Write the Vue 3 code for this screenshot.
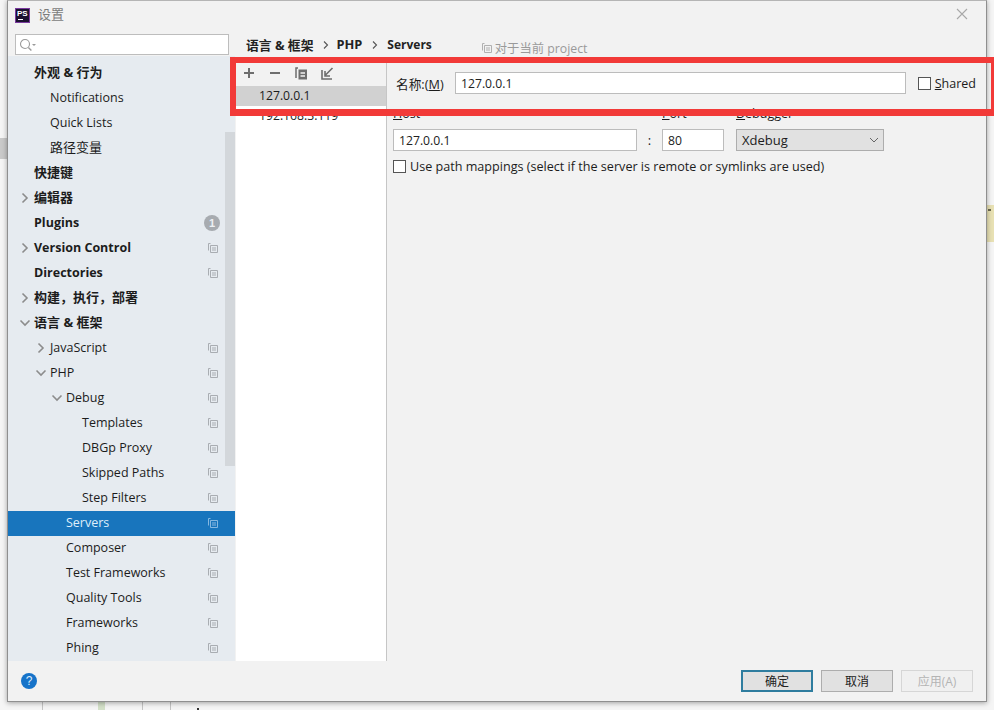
<script setup>
const tree = [
  { label: '外观 & 行为', level: 0, bold: true },
  { label: 'Notifications', level: 1 },
  { label: 'Quick Lists', level: 1 },
  { label: '路径变量', level: 1 },
  { label: '快捷键', level: 0, bold: true },
  { label: '编辑器', level: 0, bold: true, arrow: 'right' },
  { label: 'Plugins', level: 0, bold: true, badge: '1' },
  { label: 'Version Control', level: 0, bold: true, arrow: 'right', copy: true },
  { label: 'Directories', level: 0, bold: true, copy: true },
  { label: '构建，执行，部署', level: 0, bold: true, arrow: 'right' },
  { label: '语言 & 框架', level: 0, bold: true, arrow: 'down' },
  { label: 'JavaScript', level: 1, arrow: 'right', copy: true },
  { label: 'PHP', level: 1, arrow: 'down', copy: true },
  { label: 'Debug', level: 2, arrow: 'down', copy: true },
  { label: 'Templates', level: 3, copy: true },
  { label: 'DBGp Proxy', level: 3, copy: true },
  { label: 'Skipped Paths', level: 3, copy: true },
  { label: 'Step Filters', level: 3, copy: true },
  { label: 'Servers', level: 2, copy: true, selected: true },
  { label: 'Composer', level: 2, copy: true },
  { label: 'Test Frameworks', level: 2, copy: true },
  { label: 'Quality Tools', level: 2, copy: true },
  { label: 'Frameworks', level: 2, copy: true },
  { label: 'Phing', level: 2, copy: true }
]
const isCjk = (text) => /[\u4e00-\u9fff]/.test(text)
</script>

<template>
  <div class="page">
    <div class="bg-left"></div>
    <div class="bg-right"><i></i></div>
    <div class="bg-bottom">
      <i class="line l1"></i><i class="green"></i><i class="line l2"></i><i class="line l3"></i><i class="mark"></i>
    </div>

    <div class="dialog">
      <header class="titlebar">
        <div class="logo"><span>PS</span><i></i></div>
        <span class="title">设置</span>
        <svg class="close" width="12" height="12" viewBox="0 0 12 12">
          <path d="M1 1l10 10M11 1L1 11" stroke="#a8a8a8" stroke-width="1.1" fill="none" />
        </svg>
      </header>

      <div class="content">
        <aside class="sidebar">
          <div class="searchwrap">
            <div class="search">
              <svg width="18" height="14" viewBox="0 0 18 14">
                <circle cx="6" cy="6" r="4.5" stroke="#9a9a9a" stroke-width="1.1" fill="none" />
                <path d="M9.4 9.4l3 3" stroke="#9a9a9a" stroke-width="1.4" />
                <path d="M13 6h4l-2 2z" fill="#9a9a9a" />
              </svg>
            </div>
          </div>
          <div class="tree">
            <div
              v-for="item in tree"
              :key="item.label"
              class="row"
              :class="{ bold: item.bold, selected: item.selected, cjk: isCjk(item.label) }"
              :style="{ paddingLeft: 26 + item.level * 16 + 'px' }"
            >
              <svg v-if="item.arrow === 'right'" class="arrow" width="10" height="12" viewBox="0 0 10 12">
                <path d="M2.5 1.5L7 6l-4.5 4.5" stroke="#8c8c8c" stroke-width="1.6" fill="none" />
              </svg>
              <svg v-if="item.arrow === 'down'" class="arrow down" width="12" height="10" viewBox="0 0 12 10">
                <path d="M1.5 2.5L6 7l4.5-4.5" stroke="#8c8c8c" stroke-width="1.6" fill="none" />
              </svg>
              <span class="rowlabel">{{ item.label }}</span>
              <svg v-if="item.copy" class="copy" width="10" height="10" viewBox="0 0 10 10">
                <path d="M2.5 .5H.5v7M2.5 2.5h7v7h-7zM4 5h4M4 7h4" stroke="currentColor" fill="none" />
              </svg>
              <span v-if="item.badge" class="badge">{{ item.badge }}</span>
            </div>
            <div class="scrollbar"></div>
          </div>
        </aside>

        <section class="main">
          <nav class="crumbs">
            <b>语言 &amp; 框架</b>
            <svg class="sep" width="6" height="8" viewBox="0 0 6 8"><path d="M1 .5L4.5 4 1 7.5" stroke="#555" stroke-width="1.1" fill="none" /></svg>
            <b>PHP</b>
            <svg class="sep" width="6" height="8" viewBox="0 0 6 8"><path d="M1 .5L4.5 4 1 7.5" stroke="#555" stroke-width="1.1" fill="none" /></svg>
            <b class="last">Servers</b>
            <span class="scope">
              <svg width="10" height="10" viewBox="0 0 10 10">
                <path d="M2.5 .5H.5v7M2.5 2.5h7v7h-7zM4 5h4M4 7h4" stroke="#b0b0b0" fill="none" />
              </svg>
              对于当前 project
            </span>
          </nav>

          <div class="split">
            <div class="list">
              <div class="listbar">
                <svg width="12" height="12" viewBox="0 0 12 12"><path d="M6 1v10M1 6h10" stroke="#6e6e6e" stroke-width="2" /></svg>
                <svg width="12" height="12" viewBox="0 0 12 12"><path d="M1 6h10" stroke="#6e6e6e" stroke-width="2" /></svg>
                <svg width="13" height="13" viewBox="0 0 13 13">
                  <path d="M3 1H1v10" stroke="#6e6e6e" stroke-width="1.5" fill="none" />
                  <path d="M3.500 2.500h8.500v10H3.500z" fill="#6e6e6e" />
                  <path d="M5.500 6h4.500M5.500 9h4.500" stroke="#f2f2f2" stroke-width="1.4" />
                </svg>
                <svg width="13" height="13" viewBox="0 0 13 13">
                  <path d="M1 3v9h10" stroke="#6e6e6e" stroke-width="1.6" fill="none" />
                  <path d="M11.500 1L4.500 8M4 4v5h5" stroke="#6e6e6e" stroke-width="1.6" fill="none" />
                </svg>
              </div>
              <div class="server active">127.0.0.1</div>
              <div class="server">192.168.3.119</div>
            </div>

            <div class="form">
              <div class="namerow">
                <label class="namelabel">名称:(<u>M</u>)</label>
                <input class="input grow" value="127.0.0.1" />
                <span class="box"></span>
                <span class="boxlabel"><u>S</u>hared</span>
              </div>

              <div class="fields">
                <div class="field host">
                  <label><u>H</u>ost</label>
                  <input class="input" value="127.0.0.1" />
                </div>
                <span class="colon">:</span>
                <div class="field port">
                  <label><u>P</u>ort</label>
                  <input class="input" value="80" />
                </div>
                <div class="field debugger">
                  <label><u>D</u>ebugger</label>
                  <div class="select">
                    <span>Xdebug</span>
                    <svg width="10" height="6" viewBox="0 0 10 6"><path d="M1 1l4 4 4-4" stroke="#666" fill="none" /></svg>
                  </div>
                </div>
              </div>

              <div class="mapping">
                <span class="box"></span>
                <span class="maptext">Use path mappings (select if the server is remote or symlinks are used)</span>
              </div>
            </div>
          </div>
        </section>
      </div>

      <footer class="footer">
        <span class="help">?</span>
        <div class="buttons">
          <button class="btn primary">确定</button>
          <button class="btn">取消</button>
          <button class="btn disabled">应用(A)</button>
        </div>
      </footer>
    </div>

    <div class="redbox"></div>
  </div>
</template>

<style>
html, body { margin: 0; padding: 0; }
</style>

<style scoped>
.page {
  position: relative;
  width: 994px;
  height: 710px;
  overflow: hidden;
  background: #f5f5f5;
  font-family: "Open Sans", "Noto Sans CJK SC", sans-serif;
  font-size: 13px;
  color: #1c1c1c;
}
.bg-left { position: absolute; left: 0; top: 138px; width: 7px; height: 21px; background: #c9c9c9; }
.bg-right { position: absolute; right: 0; top: 205px; width: 7px; height: 37px; background: #e8e1b4; }
.bg-right i { position: absolute; left: 1px; top: 4px; width: 3px; height: 2px; background: #6d6a50; }
.bg-bottom { position: absolute; left: 0; right: 0; top: 702px; height: 8px; }
.line { position: absolute; top: 0; width: 1px; height: 8px; background: #c4c4c4; }
.l1 { left: 42px; }
.l2 { left: 142px; }
.l3 { left: 170px; }
.green { position: absolute; left: 98px; top: 0; width: 7px; height: 8px; background: #d3e0c8; }
.mark { position: absolute; left: 197px; top: 6px; width: 2px; height: 2px; background: #333; }

.dialog {
  position: relative;
  margin-left: 7px;
  width: 980px;
  height: 702px;
  box-sizing: border-box;
  border: 1px solid #8f8f8f;
  border-top-color: #b5b5b5;
  background: #f2f2f2;
  display: flex;
  flex-direction: column;
  box-shadow: 0 1px 5px rgba(0, 0, 0, .35);
}

.titlebar {
  height: 29px;
  flex: none;
  display: flex;
  align-items: center;
  padding: 0 17px 0 7px;
}
.logo {
  width: 15px;
  height: 15px;
  flex: none;
  box-sizing: border-box;
  background: #1b1030;
  border: 1px solid #7a3a9e;
  position: relative;
  color: #fff;
  font: 700 8px/10px "Liberation Sans", sans-serif;
  padding-left: 1px;
}
.logo span { display: block; }
.logo i { position: absolute; left: 2px; bottom: 2px; width: 5px; height: 1px; background: #fff; }
.title { margin-left: 8px; margin-top: -3px; color: #7c7c7c; font-size: 13px; line-height: 20px; }
.close { margin-left: auto; margin-top: -3px; margin-right: 1px; }

.content { flex: 1; min-height: 0; display: flex; }

.sidebar { width: 227px; flex: none; display: flex; flex-direction: column; background: #e6ebf0; }
.searchwrap { background: #f2f2f2; padding: 4px 6px 0 7px; height: 26px; box-sizing: border-box; }
.search {
  width: 214px;
  height: 21px;
  box-sizing: border-box;
  background: #fff;
  border: 1px solid #bdbdbd;
  display: flex;
  align-items: center;
  padding-left: 3px;
}
.tree { position: relative; flex: 1; min-height: 0; overflow: hidden; padding-top: 5px; }
.row {
  position: relative;
  height: 25px;
  box-sizing: border-box;
  padding-bottom: 2px;
  display: flex;
  align-items: center;
  padding-right: 17px;
  white-space: nowrap;
  font-size: 12.5px;
}
.row.cjk { font-size: 13px; }
.row.bold .rowlabel { font-weight: 700; }
.row.selected { background: #1875bd; color: #dfeefa; }
.row.selected .copy { color: #86b8e0; }
.rowlabel { flex: 1; line-height: 23px; }
.arrow { margin-left: -14px; margin-right: 4px; flex: none; }
.arrow.down { margin-left: -15px; margin-right: 3px; }
.copy { flex: none; color: #a9adb2; position: relative; z-index: 1; }
.badge {
  width: 16px;
  height: 16px;
  flex: none;
  border-radius: 50%;
  background: #a7abb0;
  color: #eef1f4;
  font: 700 11px/16px "Liberation Sans", sans-serif;
  text-align: center;
  margin-right: -2px;
  position: relative;
  z-index: 1;
}
.scrollbar { position: absolute; right: 0; top: 76px; width: 10px; height: 334px; background: #d3d7db; }

.main { flex: 1; min-width: 0; display: flex; flex-direction: column; margin-left: 1px; }
.crumbs {
  height: 30px;
  flex: none;
  display: flex;
  align-items: center;
  padding: 0 0 2px 10px;
  box-sizing: border-box;
  color: #222;
}
.crumbs b { font-weight: 700; font-size: 12.8px; }
.crumbs b.last { font-size: 12px; margin-left: 2px; }
.sep { margin: 1px 7px 0 10px; }
.scope {
  margin-left: 50px;
  margin-top: 7px;
  color: #9a9a9a;
  display: flex;
  align-items: center;
  gap: 3px;
  font-size: 12.3px;
}

.split { flex: 1; min-height: 0; display: flex; }
.list {
  width: 151px;
  flex: none;
  box-sizing: border-box;
  border-right: 1px solid #c6c6c6;
  background: #fff;
}
.listbar {
  height: 26px;
  background: #f2f2f2;
  display: flex;
  align-items: center;
  padding: 0 0 0 7px;
  gap: 14px;
  box-sizing: border-box;
}
.listbar svg { flex: none; }
.listbar svg:last-child { margin-left: -1px; }
.server { height: 20px; line-height: 20px; padding-left: 23px; font-size: 12.2px; }
.server.active { background: #d1d1d1; }

.form { flex: 1; min-width: 0; padding: 12px 0 0 6px; }
.namerow { display: flex; align-items: center; height: 22px; padding-left: 3px; padding-right: 10px; }
.namelabel { width: 59px; flex: none; font-size: 12.7px; }
.input {
  box-sizing: border-box;
  height: 22px;
  border: 1px solid #bcbcbc;
  background: #fff;
  padding: 0 5px;
  font: inherit;
  font-size: 12.2px;
  color: #222;
  outline: none;
  width: 100%;
  display: block;
}
.input.grow { flex: 1; width: auto; min-width: 0; }
.box {
  width: 13px;
  height: 13px;
  box-sizing: border-box;
  border: 1px solid #555;
  background: #fff;
  flex: none;
}
.namerow .box { margin-left: 12px; margin-right: 4px; }
.boxlabel { flex: none; font-size: 12.5px; }

.fields { display: flex; align-items: flex-end; margin-top: 12px; }
.field label { display: block; height: 18px; line-height: 16px; margin-bottom: 5px; font-size: 12.5px; }
.host { width: 244px; }
.colon { width: 25px; text-align: center; height: 22px; line-height: 22px; }
.port { width: 62px; }
.debugger { width: 148px; margin-left: 12px; }
.select {
  box-sizing: border-box;
  height: 22px;
  border: 1px solid #adadad;
  background: #e1e1e1;
  display: flex;
  align-items: center;
  justify-content: space-between;
  padding: 0 4px 0 5px;
}
.mapping { display: flex; align-items: center; gap: 4px; margin-top: 7px; height: 16px; }
.maptext { font-size: 12.6px; }

.footer {
  height: 40px;
  flex: none;
  display: flex;
  align-items: center;
  justify-content: space-between;
  padding: 0 13px 0 13px;
  box-sizing: border-box;
}
.help {
  width: 16px;
  height: 16px;
  border-radius: 50%;
  background: #1673c9;
  color: #dcecfb;
  font: 12px/16px "Liberation Sans", sans-serif;
  text-align: center;
}
.buttons { display: flex; gap: 8px; }
.btn {
  width: 72px;
  height: 22px;
  box-sizing: border-box;
  border: 1px solid #adadad;
  background: #e1e1e1;
  font: inherit;
  font-size: 12px;
  color: #222;
  padding: 0;
}
.btn.primary { border: 2px solid #2f7d9f; }
.btn.disabled { background: #f0f0f0; border-color: #d6d6d6; color: #b4b4b4; }

.redbox {
  position: absolute;
  left: 230px;
  top: 57px;
  width: 770px;
  height: 59px;
  box-sizing: border-box;
  border: 6px solid #f23a38;
  border-bottom-width: 7px;
  border-right-width: 9px;
  pointer-events: none;
}
</style>
